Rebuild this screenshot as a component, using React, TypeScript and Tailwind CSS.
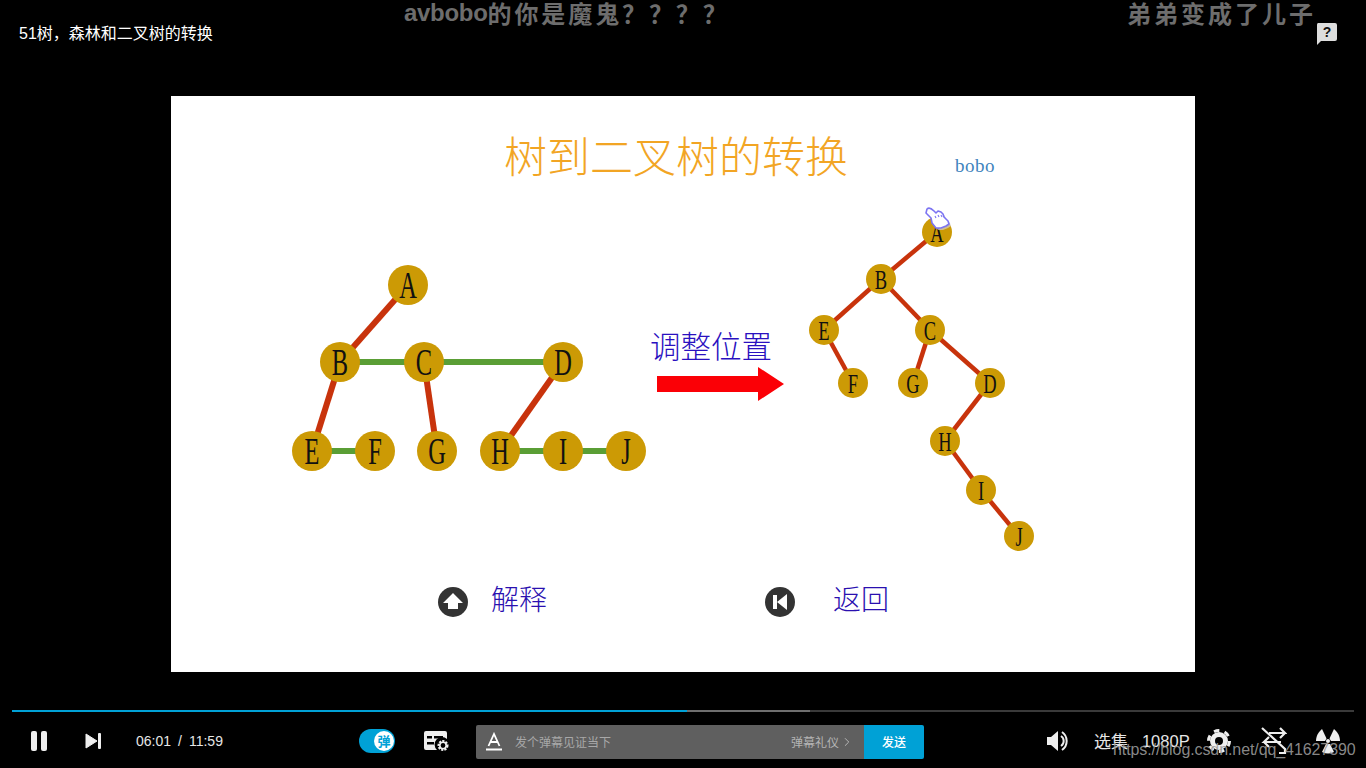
import React from "react";
import { ChevronRight } from "lucide-react";

const cjk = "font-['Noto_Sans_CJK_SC',sans-serif]";
const sans = "font-['Liberation_Sans','Noto_Sans_CJK_SC',sans-serif]";

type N = { l: string; x: number; y: number };

function Tree({ nodes, edges, r, fs, sw, className }: { nodes: N[]; edges: [string, string, string][]; r: number; fs: number; sw: number; className: string }) {
  const at = (l: string) => nodes.find((n) => n.l === l)!;
  return (
    <svg className={className} viewBox="0 0 1024 576">
      {edges.map(([a, b, c]) => (
        <line key={a + b} x1={at(a).x} y1={at(a).y} x2={at(b).x} y2={at(b).y} stroke={c} strokeWidth={sw} />
      ))}
      {nodes.map((n) => (
        <g key={n.l}>
          <circle cx={n.x} cy={n.y} r={r} fill="#cc9a05" />
          <text
            transform={`translate(${n.x} ${n.y + fs * 0.34}) scale(0.66 1)`}
            textAnchor="middle"
            fontSize={fs}
            fill="#111"
            fontFamily="Liberation Serif, serif"
          >
            {n.l}
          </text>
        </g>
      ))}
    </svg>
  );
}

const O = 171, T = 96;
const red = "#c8330c", green = "#5a9e35";
const leftNodes: N[] = [
  ["A", 408, 285], ["B", 340, 362], ["C", 424, 362], ["D", 563, 362], ["E", 312, 451],
  ["F", 375, 451], ["G", 437, 451], ["H", 500, 451], ["I", 563, 451], ["J", 626, 451],
].map(([l, x, y]) => ({ l: l as string, x: (x as number) - O, y: (y as number) - T }));
const rightNodes: N[] = [
  ["A", 937, 232], ["B", 881, 279], ["E", 824, 330], ["C", 930, 330], ["F", 853, 383],
  ["G", 913, 383], ["D", 990, 383], ["H", 945, 441], ["I", 981, 490], ["J", 1019, 536],
].map(([l, x, y]) => ({ l: l as string, x: (x as number) - O, y: (y as number) - T }));

export default function App() {
  return (
    <div className={`relative flex h-[768px] w-[1366px] flex-col overflow-hidden bg-black ${sans}`}>
      <div className="flex h-[96px] shrink-0 items-start pl-[19px] pt-[24px] text-[16px] leading-[20px] text-white">
        51树，森林和二叉树的转换
      </div>

      <div className="relative mx-auto h-[576px] w-[1024px] shrink-0 bg-white">
        <div className={`absolute left-[333px] top-[28px] text-[43px] leading-[60px] font-light text-[#f2a524] whitespace-nowrap ${cjk}`}>
          树到二叉树的转换
        </div>
        <div className="absolute left-[784px] top-[58px] font-['Liberation_Serif',serif] text-[19px] leading-[24px] tracking-[0.5px] text-[#3f84bd]">bobo</div>

        <Tree
          className="absolute inset-0 h-full w-full"
          r={20}
          fs={37}
          sw={6}
          nodes={leftNodes}
          edges={[
            ["A", "B", red], ["B", "E", red], ["C", "G", red], ["D", "H", red],
            ["B", "C", green], ["C", "D", green], ["E", "F", green], ["H", "I", green], ["I", "J", green],
          ]}
        />
        <Tree
          className="absolute inset-0 h-full w-full"
          r={15}
          fs={28}
          sw={4.5}
          nodes={rightNodes}
          edges={[
            ["A", "B", red], ["B", "E", red], ["B", "C", red], ["E", "F", red], ["C", "G", red],
            ["C", "D", red], ["D", "H", red], ["H", "I", red], ["I", "J", red],
          ]}
        />

        <svg className="absolute left-[752px] top-[108px] h-[30px] w-[34px]" viewBox="0 0 34 30">
          <path d="M6 7c2-2 5 0 7 2l2 2 2-2 3 1 2 2 1 3 4 4 1 3-3 2-5 2-5 0-4-5-1-5-5-5z" fill="#cfcfcf" opacity="0.7" />
          <path d="M4 5c2-2 5 0 7 2l2 2 2-2 3 1 2 2 1 3 4 4 1 3-3 2-5 2-5 0-4-5-1-5-5-5z" fill="#fff" stroke="#7c74f2" strokeWidth="1.6" strokeLinejoin="round" />
          <path d="M12 12l1 2M15 11l1 2M18 11l1 2" stroke="#7c74f2" strokeWidth="1.1" />
        </svg>

        <div className={`absolute left-[479px] top-[228px] text-[30.5px] leading-[42px] font-light text-[#2a10c0] whitespace-nowrap ${cjk}`}>调整位置</div>
        <svg className="absolute left-[486px] top-[270px] h-[36px] w-[128px]" viewBox="0 0 128 36">
          <path d="M0 10H101V1L127 18 101 35V26H0Z" fill="#fb0006" />
        </svg>

        <svg className="absolute left-[267px] top-[491px] h-[30px] w-[30px]" viewBox="0 0 30 30">
          <circle cx="15" cy="15" r="15" fill="#333" />
          <path d="M15 6 25 16H20V22H10V16H5Z" fill="#fff" />
        </svg>
        <div className={`absolute left-[320px] top-[482px] text-[28px] leading-[40px] font-light text-[#2a10b0] whitespace-nowrap ${cjk}`}>解释</div>
        <svg className="absolute left-[594px] top-[491px] h-[30px] w-[30px]" viewBox="0 0 30 30">
          <circle cx="15" cy="15" r="15" fill="#333" />
          <path d="M8 8H12V22H8ZM22 7V23L12 15Z" fill="#fff" />
        </svg>
        <div className={`absolute left-[662px] top-[482px] text-[28px] leading-[40px] font-light text-[#2a10b0] whitespace-nowrap ${cjk}`}>返回</div>
      </div>

      <div className="mx-[12px] mt-[38px] flex h-[2px] shrink-0 bg-[#3a3a3a]">
        <div className="h-full w-[675px] bg-[#00a1d6]" />
        <div className="h-full w-[123px] bg-[#6e6e6e]" />
      </div>

      <div className="flex h-[56px] shrink-0 items-center pl-[29px] pt-[2px] text-[#e6e6e6]">
        <svg className="h-[20px] w-[20px]" viewBox="0 0 20 20" fill="#eee">
          <rect x="2" y="0" width="6" height="20" rx="2" />
          <rect x="12" y="0" width="6" height="20" rx="2" />
        </svg>
        <svg className="ml-[36px] h-[16px] w-[16px]" viewBox="0 0 16 16" fill="#eee">
          <path d="M1 1 12 8 1 15Z" stroke="#eee" strokeLinejoin="round" />
          <rect x="13" y="0" width="3" height="16" rx="1" />
        </svg>
        <div className="ml-[35px] flex text-[14px] leading-[18px] whitespace-nowrap">
          <span>06:01</span>
          <span className="mx-[7px]">/</span>
          <span>11:59</span>
        </div>

        <div className="ml-[136px] flex h-[24px] w-[36px] items-center justify-end rounded-full bg-[#00a1d6] pr-[1px]">
          <div className={`flex h-[20px] w-[20px] items-center justify-center rounded-full bg-white text-[13px] font-bold text-[#00a1d6] ${cjk}`}>弹</div>
        </div>
        <svg className="ml-[29px] h-[22px] w-[26px]" viewBox="0 0 26 22" fill="#eee">
          <path d="M2 1H21a2 2 0 0 1 2 2V9a7 7 0 0 0-10 11H2a2 2 0 0 1-2-2V3a2 2 0 0 1 2-2Z" />
          <rect x="3" y="6" width="5" height="2.5" fill="#000" />
          <rect x="10" y="6" width="9" height="2.5" fill="#000" />
          <rect x="3" y="12" width="7" height="2.5" fill="#000" />
          <circle cx="19" cy="15.5" r="4.2" fill="none" stroke="#eee" strokeWidth="2.6" strokeDasharray="2 1.1" />
          <circle cx="19" cy="15.5" r="3.2" fill="none" stroke="#eee" strokeWidth="1.6" />
        </svg>

        <div className="ml-[26px] mt-[2px] flex h-[34px] w-[448px] overflow-hidden rounded-[2px]">
          <div className="flex flex-1 items-center bg-[#5f5f5f] pl-[9px] pr-[10px]">
            <svg className="h-[20px] w-[18px]" viewBox="0 0 18 20" fill="none" stroke="#fff">
              <path d="M3.500 14 9 2l5.500 12M5.500 10h7" strokeWidth="1.8" />
              <rect x="1" y="16.5" width="16" height="2" fill="#fff" stroke="none" />
            </svg>
            <span className={`ml-[12px] text-[12px] text-[#a8a8a8] ${cjk}`}>发个弹幕见证当下</span>
            <span className={`ml-auto text-[12px] text-[#b4b4b4] ${cjk}`}>弹幕礼仪</span>
            <ChevronRight className="ml-[1px] h-[14px] w-[14px] text-[#c0c0c0]" strokeWidth={1.5} />
          </div>
          <div className={`flex w-[60px] items-center justify-center bg-[#00a1d6] text-[12px] font-medium text-white ${cjk}`}>发送</div>
        </div>

        <svg className="ml-[122px] h-[22px] w-[24px]" viewBox="0 0 24 22" fill="#eee">
          <path d="M1 7H5L12 1V21L5 15H1Z" />
          <path d="M15 6a6 6 0 0 1 0 10M16 2a11 11 0 0 1 0 18" fill="none" stroke="#eee" strokeWidth="2" />
        </svg>
        <div className={`ml-[24px] text-[17px] whitespace-nowrap ${cjk}`}>选集</div>
        <div className="ml-[14px] text-[16.5px] whitespace-nowrap">1080P</div>
        <svg className="ml-[17px] h-[24px] w-[24px]" viewBox="0 0 24 24">
          <circle cx="12" cy="12" r="6.5" fill="none" stroke="#eee" strokeWidth="5" />
          <circle cx="12" cy="12" r="10.5" fill="none" stroke="#eee" strokeWidth="3" strokeDasharray="5.5 5.5" />
        </svg>
        <svg className="ml-[30px] h-[28px] w-[26px]" viewBox="0 0 26 28" fill="none" stroke="#eee" strokeWidth="2.2">
          <path d="M1 1 24 22V26H18" />
          <path d="M8 6H24L19 1M24 6 19 11" />
          <path d="M20 15H3L8 10M3 15 8 20" />
        </svg>
        <svg className="ml-[28px] h-[26px] w-[26px]" viewBox="0 0 26 26" fill="#eee">
          <path d="M7 1 11.5 10.5 10 13H1C1 8 3.5 4 7 1Z" />
          <path d="M19 1 14.5 10.5 16 13H25C25 8 22.500 4 19 1Z" />
          <circle cx="13" cy="13" r="2" />
          <path d="M11 16H15L19 24C15 26 11 26 7 24Z" />
        </svg>
      </div>

      <div className="absolute left-[404px] top-0 flex text-[24px] leading-[26px] font-bold whitespace-nowrap text-[#6d6d6d]">
        <span className="tracking-[-0.3px] font-['Liberation_Sans',sans-serif]">avbobo</span>
        <span className={`tracking-[2.9px] ${cjk}`}>的你是魔鬼？？？？</span>
      </div>
      <div className={`absolute left-[1127px] top-0 text-[24px] leading-[26px] font-bold tracking-[3px] whitespace-nowrap text-[#6d6d6d] ${cjk}`}>弟弟变成了儿子</div>
      <svg className="absolute left-[1316px] top-[22px] h-[24px] w-[22px]" viewBox="0 0 22 24">
        <path d="M2 1H19a2 2 0 0 1 2 2V17a2 2 0 0 1-2 2H5L1 23V3a2 2 0 0 1 1-2Z" fill="#ddd" />
        <text x="11" y="15" textAnchor="middle" fontSize="14" fontWeight="700" fill="#111" fontFamily="Liberation Sans, sans-serif">?</text>
      </svg>
      <div className="absolute left-[1113px] top-[738px] text-[16px] leading-[24px] tracking-[-0.09px] whitespace-nowrap text-[#9a9a9a]/90">https://blog.csdn.net/qq_41627390</div>
    </div>
  );
}
